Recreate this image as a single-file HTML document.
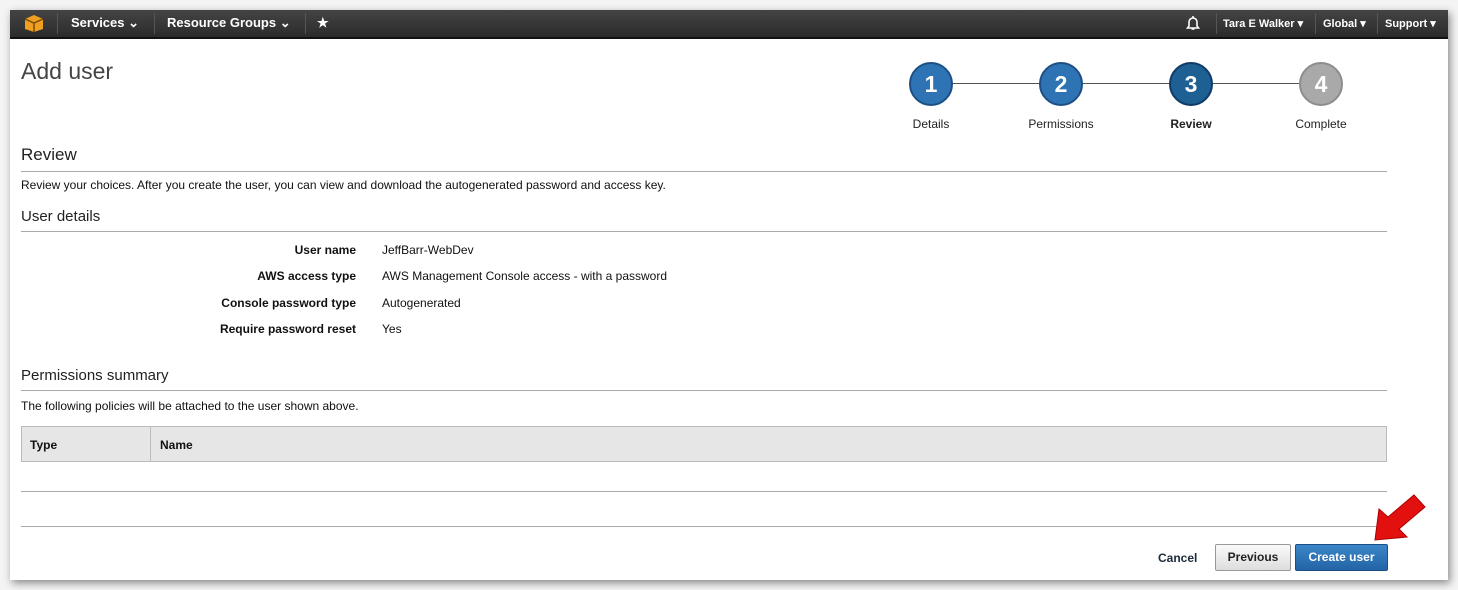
<!DOCTYPE html>
<html><head><style>
body{margin:0;width:1458px;height:590px;background:#f4f4f4;font-family:"Liberation Sans",Arial,sans-serif;position:relative;overflow:hidden}
.win{position:absolute;left:10px;top:10px;width:1438px;height:570px;background:#fff;box-shadow:2px 3px 8px rgba(0,0,0,.45)}
.nav{position:absolute;left:0;top:0;width:1438px;height:27px;background:linear-gradient(#444,#2b2b2b);border-bottom:2px solid #111}
.nav span{position:absolute;color:#fff;font-weight:bold;font-size:13px;top:5px}
.nav .s{font-size:11px;top:7px}
.sep{position:absolute;top:3px;width:1px;height:21px;background:#555}
.t{position:absolute;font-size:12px;color:#111}
.h{position:absolute;font-size:17px;color:#222}
.line{position:absolute;left:11px;width:1366px;height:1px;background:#aaa}
.circ{position:absolute;width:40px;height:40px;border-radius:50%;color:#fff;font-weight:bold;font-size:23px;text-align:center;top:52px}
.lbl{position:absolute;top:107px;font-size:12px;width:100px;text-align:center;color:#222}
.k{position:absolute;left:150px;width:196px;text-align:right;font-weight:bold;font-size:12px;color:#111}
.v{position:absolute;left:372px;font-size:12px;color:#111}
</style></head><body>
<div class="win">
<div class="nav">
<svg style="position:absolute;left:14px;top:4px" width="20" height="19"><path d="M10 1L19 5V15L10 18L1 15V5Z" fill="#f0a020"/><path d="M1 5L10 9L19 5M10 9V18" stroke="#7a4a00" stroke-width="1.5" fill="none"/></svg>
<div class="sep" style="left:47px"></div>
<span style="left:61px">Services ⌄</span>
<div class="sep" style="left:144px"></div>
<span style="left:157px">Resource Groups ⌄</span>
<div class="sep" style="left:295px"></div>
<span style="left:307px">★</span>
<svg style="position:absolute;left:1176px;top:5px" width="14" height="16"><path d="M7 1V2.5M3 11V7a4 4 0 0 1 8 0v4l1.5 2h-11z M5.5 14h3" stroke="#fff" stroke-width="1.6" fill="none"/></svg>
<div class="sep" style="left:1206px"></div>
<span class="s" style="left:1213px">Tara E Walker ▾</span>
<div class="sep" style="left:1305px"></div>
<span class="s" style="left:1313px">Global ▾</span>
<div class="sep" style="left:1367px"></div>
<span class="s" style="left:1375px">Support ▾</span>
</div>
<div class="h" style="left:11px;top:48px;font-size:23px;color:#444">Add user</div>
<div style="position:absolute;left:940px;top:73px;width:370px;height:1px;background:#555"></div>
<div class="circ" style="left:899px;background:#2e74b5;border:2px solid #1d4f85;line-height:40px">1</div>
<div class="circ" style="left:1029px;background:#2e74b5;border:2px solid #1d4f85;line-height:40px">2</div>
<div class="circ" style="left:1159px;background:#1e5f94;border:2px solid #0f3b66;line-height:40px">3</div>
<div class="circ" style="left:1289px;background:#a9a9a9;border:2px solid #8d8d8d;line-height:40px">4</div>
<div class="lbl" style="left:871px">Details</div>
<div class="lbl" style="left:1001px">Permissions</div>
<div class="lbl" style="left:1131px;font-weight:bold">Review</div>
<div class="lbl" style="left:1261px">Complete</div>
<div class="h" style="left:11px;top:135px">Review</div>
<div class="line" style="top:161px"></div>
<div class="t" style="left:11px;top:168px">Review your choices. After you create the user, you can view and download the autogenerated password and access key.</div>
<div class="h" style="left:11px;top:198px;font-size:15px">User details</div>
<div class="line" style="top:221px"></div>
<div class="k" style="top:233px">User name</div><div class="v" style="top:233px">JeffBarr-WebDev</div>
<div class="k" style="top:259px">AWS access type</div><div class="v" style="top:259px">AWS Management Console access - with a password</div>
<div class="k" style="top:286px">Console password type</div><div class="v" style="top:286px">Autogenerated</div>
<div class="k" style="top:312px">Require password reset</div><div class="v" style="top:312px">Yes</div>
<div class="h" style="left:11px;top:357px;font-size:15px">Permissions summary</div>
<div class="line" style="top:380px"></div>
<div class="t" style="left:11px;top:389px">The following policies will be attached to the user shown above.</div>
<div style="position:absolute;left:11px;top:416px;width:1364px;height:34px;background:#e6e6e6;border:1px solid #bbb"></div>
<div style="position:absolute;left:140px;top:417px;width:1px;height:34px;background:#bbb"></div>
<div class="t" style="left:20px;top:428px;font-weight:bold">Type</div>
<div class="t" style="left:150px;top:428px;font-weight:bold">Name</div>
<div class="line" style="top:481px"></div>
<div class="line" style="top:516px"></div>
<div class="t" style="left:1148px;top:541px;font-weight:bold;color:#1a2a3a">Cancel</div>
<div style="position:absolute;left:1205px;top:534px;width:74px;height:25px;border:1px solid #999;border-radius:2px;background:linear-gradient(#fafafa,#ddd);font-weight:bold;font-size:12px;text-align:center;line-height:25px;color:#222">Previous</div>
<div style="position:absolute;left:1285px;top:534px;width:91px;height:25px;border:1px solid #1b4f86;border-radius:2px;background:linear-gradient(#3a86c8,#2364a6);font-weight:bold;font-size:12px;text-align:center;line-height:25px;color:#fff">Create user</div>
</div>
<svg style="position:absolute;left:1370px;top:493px" width="58" height="52"><path d="M5 47L9 16L18 24L44 2L55 14L29 36L37 44Z" fill="#e31010" stroke="#a00" stroke-width="1"/></svg>
</body></html>
